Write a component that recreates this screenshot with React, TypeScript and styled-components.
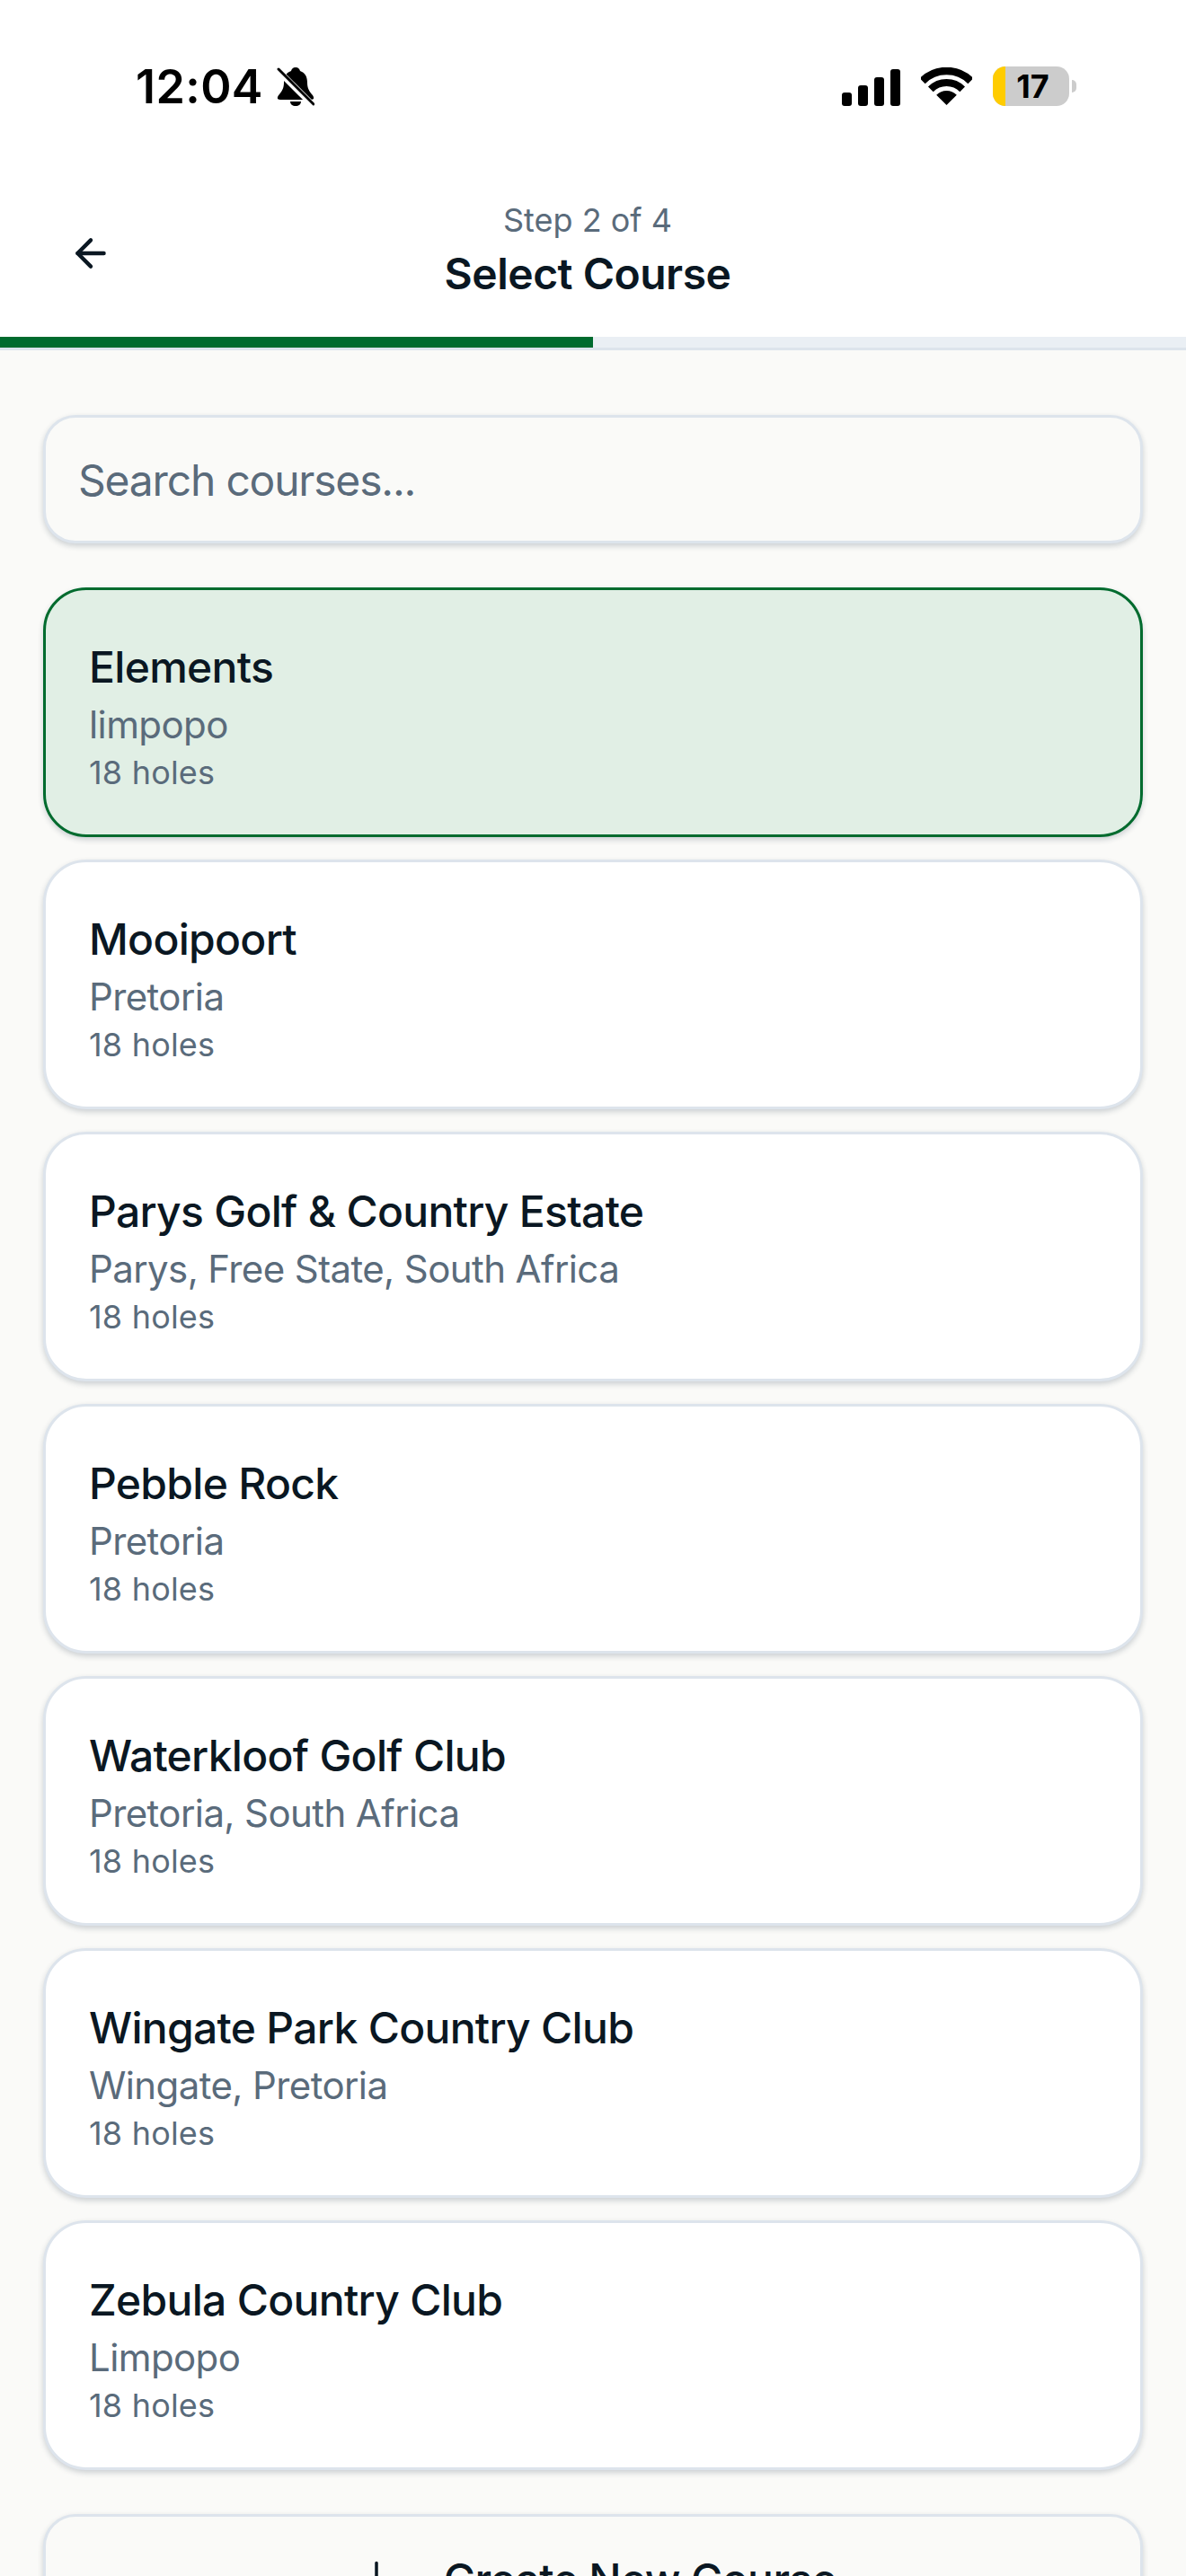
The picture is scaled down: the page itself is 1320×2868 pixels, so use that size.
import styled, { createGlobalStyle } from "styled-components";
import { ArrowLeft, Plus } from "lucide-react";

const courses = [
  { name: "Elements", place: "limpopo", selected: true },
  { name: "Mooipoort", place: "Pretoria" },
  { name: "Parys Golf & Country Estate", place: "Parys, Free State, South Africa" },
  { name: "Pebble Rock", place: "Pretoria" },
  { name: "Waterkloof Golf Club", place: "Pretoria, South Africa" },
  { name: "Wingate Park Country Club", place: "Wingate, Pretoria" },
  { name: "Zebula Country Club", place: "Limpopo" },
];

export default function App() {
  return (
    <Page>
      <GlobalStyle />
      <StatusBar>
        <TimeGroup>
          <Time>12:04</Time>
          <svg width="42" height="43" viewBox="0 0 42 43">
            <path d="M21 0c3 0 4.500 2 5 4 6 2 8 7 8 13 0 6 2 9 5 13 3 3 3 6-1 6H4c-4 0-4-3-1-6 3-4 5-7 5-13 0-6 2-11 8-13 .5-2 2-4 5-4z" />
            <path d="M15 38h12c0 3-2.500 5-6 5s-6-2-6-5z" />
            <path d="M0 2l40 40" stroke="#fff" strokeWidth="7" />
            <path d="M2 2l39 39" stroke="#000" strokeWidth="3" strokeLinecap="round" />
          </svg>
        </TimeGroup>
        <StatusIcons>
          <svg width="65" height="41" viewBox="0 0 65 41">
            <rect x="0" y="26" width="11" height="15" rx="3" />
            <rect x="18" y="18" width="11" height="23" rx="3" />
            <rect x="36" y="9" width="11" height="32" rx="3" />
            <rect x="54" y="0" width="11" height="41" rx="3" />
          </svg>
          <WifiIcon width="57" height="42" viewBox="0 0 57 42">
            <path d="M1.630 15.130A38 38 0 0 1 55.370 15.130" fill="none" stroke="#000" strokeWidth="8.500" />
            <path d="M10.820 24.320A25 25 0 0 1 46.180 24.320" fill="none" stroke="#000" strokeWidth="8" />
            <path d="M28.500 42L17.200 30.700A16 16 0 0 1 39.800 30.700Z" />
          </WifiIcon>
          <Battery>
            <BatteryBody>
              <BatteryFill />
              <BatteryLabel>17</BatteryLabel>
            </BatteryBody>
            <BatteryTip />
          </Battery>
        </StatusIcons>
      </StatusBar>

      <Header>
        <BackButton>
          <ArrowLeft size={50} strokeWidth={2.1} color="#0a1722" />
        </BackButton>
        <TitleBlock>
          <StepLabel>Step 2 of 4</StepLabel>
          <Title>Select Course</Title>
        </TitleBlock>
        <HeaderSpacer />
      </Header>

      <Progress>
        <ProgressFill />
      </Progress>

      <Content>
        <Search placeholder="Search courses..." readOnly />
        <CourseList>
          {courses.map((c) => (
            <CourseCard key={c.name} $selected={c.selected}>
              <CourseName>{c.name}</CourseName>
              <CoursePlace>{c.place}</CoursePlace>
              <CourseHoles>18 holes</CourseHoles>
            </CourseCard>
          ))}
        </CourseList>
        <CreateButton>
          <Plus size={60} strokeWidth={1.4} color="#0a1722" />
          <span>Create New Course</span>
        </CreateButton>
      </Content>
    </Page>
  );
}

const GlobalStyle = createGlobalStyle`
  html, body {
    margin: 0;
    padding: 0;
    background: #fafaf8;
    height: 2868px;
    overflow: hidden;
  }
  * { box-sizing: border-box; }
`;

const Page = styled.div`
  width: 1320px;
  height: 2868px;
  overflow: hidden;
  font-family: Inter, "Noto Sans", sans-serif;
  color: #0a1722;
  background: #fafaf8;
`;

const StatusBar = styled.div`
  height: 190px;
  background: #fff;
  padding: 74px 122px 0 151px;
  display: flex;
  justify-content: space-between;
  align-items: flex-start;
`;

const TimeGroup = styled.div`
  display: flex;
  align-items: center;
  gap: 15px;
  height: 45px;
`;

const Time = styled.span`
  font-size: 52px;
  font-weight: 600;
  line-height: 45px;
  color: #000;
  letter-spacing: 0.4px;
`;

const StatusIcons = styled.div`
  display: flex;
  align-items: flex-end;
  gap: 23px;
  height: 44px;
`;

const WifiIcon = styled.svg`
  margin-bottom: 1px;
`;

const Battery = styled.div`
  display: flex;
  align-items: center;
  gap: 3px;
`;

const BatteryBody = styled.div`
  position: relative;
  width: 85px;
  height: 44px;
  border-radius: 14px;
  background: #cccccc;
  overflow: hidden;
  display: flex;
  align-items: center;
  justify-content: center;
  padding-left: 4px;
`;

const BatteryFill = styled.div`
  position: absolute;
  left: 0;
  top: 0;
  bottom: 0;
  width: 14px;
  background: #ffcc00;
`;

const BatteryLabel = styled.span`
  font-size: 36px;
  font-weight: 700;
  line-height: 1;
  color: #000;
`;

const BatteryTip = styled.div`
  width: 5px;
  height: 14px;
  background: #cccccc;
  border-radius: 0 5px 5px 0;
`;

const Header = styled.div`
  height: 185px;
  background: #fff;
  display: flex;
  align-items: flex-start;
  justify-content: space-between;
`;

const BackButton = styled.div`
  width: 200px;
  padding: 67px 0 0 76px;
  line-height: 0;
`;

const TitleBlock = styled.div`
  display: flex;
  flex-direction: column;
  align-items: center;
  padding-top: 30px;
`;

const StepLabel = styled.div`
  font-size: 36px;
  line-height: 50px;
  color: #5a6b7b;
`;

const Title = styled.div`
  font-size: 48px;
  font-weight: 600;
  line-height: 70px;
  letter-spacing: -0.5px;
`;

const HeaderSpacer = styled.div`
  width: 212px;
`;

const Progress = styled.div`
  height: 15px;
  background: #eaeff4;
  border-bottom: 3px solid #dde4ec;
`;

const ProgressFill = styled.div`
  width: 660px;
  height: 12px;
  background: #006b2e;
`;

const Content = styled.div`
  padding: 72px 48px 0;
`;

const Search = styled.input`
  display: block;
  width: 100%;
  height: 143px;
  padding: 2px 36px 0;
  border: 3px solid #dde4ec;
  border-radius: 36px;
  background: #fafaf8;
  font-family: inherit;
  font-size: 48px;
  letter-spacing: -1.2px;
  color: #0a1722;
  box-shadow: 0 3px 6px rgba(20, 40, 60, 0.2);
  outline: none;

  &::placeholder {
    color: #5a6b7b;
    opacity: 1;
  }
`;

const CourseList = styled.div`
  display: flex;
  flex-direction: column;
  gap: 25px;
  margin-top: 49px;
`;

const CourseCard = styled.div<{ $selected?: boolean }>`
  height: 278px;
  padding: 51px 48px 0;
  border: 3px solid ${(p) => (p.$selected ? "#006b2e" : "#dde4ec")};
  border-radius: 48px;
  background: ${(p) => (p.$selected ? "#e1efe5" : "#ffffff")};
  box-shadow: 0 3px 6px rgba(20, 40, 60, 0.2);
`;

const CourseName = styled.div`
  font-size: 48px;
  font-weight: 450;
  line-height: 70px;
  letter-spacing: -0.7px;
`;

const CoursePlace = styled.div`
  font-size: 42px;
  line-height: 57px;
  letter-spacing: -0.6px;
  color: #5a6b7b;
`;

const CourseHoles = styled.div`
  font-size: 36px;
  line-height: 50px;
  letter-spacing: 0.2px;
  color: #5a6b7b;
`;

const CreateButton = styled.div`
  margin-top: 49px;
  padding: 39px 0 40px;
  border: 3px solid #dde4ec;
  border-radius: 36px;
  background: #fafaf8;
  box-shadow: 0 3px 6px rgba(20, 40, 60, 0.2);
  display: flex;
  align-items: center;
  justify-content: center;
  gap: 45px;
  font-size: 48px;
  font-weight: 500;
  letter-spacing: -0.6px;
`;
